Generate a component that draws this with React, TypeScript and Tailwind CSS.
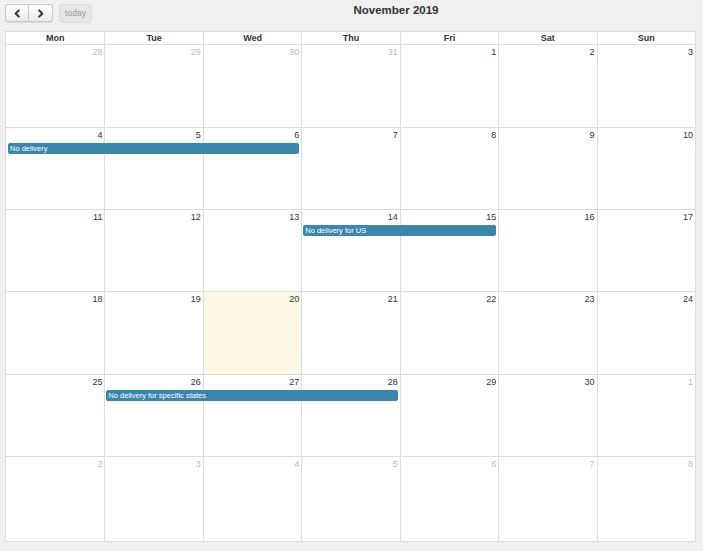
import React from 'react'

type Day = { n: number; other?: boolean; today?: boolean }
type Ev = { title: string; start: string; span: string }
type Week = { days: Day[]; events: Ev[] }

const colStart = ['col-start-1', 'col-start-2', 'col-start-3', 'col-start-4', 'col-start-5', 'col-start-6', 'col-start-7']

const weeks: Week[] = [
  {
    days: [{ n: 28, other: true }, { n: 29, other: true }, { n: 30, other: true }, { n: 31, other: true }, { n: 1 }, { n: 2 }, { n: 3 }],
    events: [],
  },
  {
    days: [4, 5, 6, 7, 8, 9, 10].map((n) => ({ n })),
    events: [{ title: 'No delivery', start: 'col-start-1', span: 'col-span-3' }],
  },
  {
    days: [11, 12, 13, 14, 15, 16, 17].map((n) => ({ n })),
    events: [{ title: 'No delivery for US', start: 'col-start-4', span: 'col-span-2' }],
  },
  {
    days: [18, 19, 20, 21, 22, 23, 24].map((n) => ({ n, today: n === 20 })),
    events: [],
  },
  {
    days: [{ n: 25 }, { n: 26 }, { n: 27 }, { n: 28 }, { n: 29 }, { n: 30 }, { n: 1, other: true }],
    events: [{ title: 'No delivery for specific states', start: 'col-start-2', span: 'col-span-3' }],
  },
  {
    days: [2, 3, 4, 5, 6, 7, 8].map((n) => ({ n, other: true })),
    events: [],
  },
]

const dayNames = ['Mon', 'Tue', 'Wed', 'Thu', 'Fri', 'Sat', 'Sun']

function Chevron({ dir }: { dir: 'left' | 'right' }) {
  return (
    <svg width="9" height="9" viewBox="0 0 10 10" fill="none" stroke="#333" strokeWidth="2.2" strokeLinecap="round" strokeLinejoin="round">
      {dir === 'left' ? <path d="M6.5 1.5 3 5l3.5 3.5" /> : <path d="M3.5 1.5 7 5 3.5 8.5" />}
    </svg>
  )
}

export default function App() {
  return (
    <div className="min-h-[551px] bg-[#f0f0f0] px-[5px] pt-[4px] text-[#333]" style={{ fontFamily: '"Liberation Sans", Arial, sans-serif' }}>
      <div className="flex items-start h-[27px]">
        <div className="flex">
          <div className="flex h-[18px] rounded-[3px] border border-[#c8c8c8] bg-gradient-to-b from-white to-[#ececec] shadow-[0_1px_1px_rgba(0,0,0,0.08)]">
            <button className="flex w-[23px] items-center justify-center border-r border-[#c8c8c8]">
              <Chevron dir="left" />
            </button>
            <button className="flex w-[23px] items-center justify-center">
              <Chevron dir="right" />
            </button>
          </div>
          <button className="ml-[6px] h-[19px] w-[33px] rounded-[3px] border border-[#dcdcdc] bg-[#e6e6e6] text-[8.5px] text-[#999]">
            today
          </button>
        </div>
        <h2 className="flex-1 pl-[2px] text-center text-[11.5px] font-bold leading-[13px]">November 2019</h2>
      </div>

      <div className="w-[691px] border border-[#ddd] bg-white">
        <div className="grid h-[12px] grid-cols-7">
          {dayNames.map((d, i) => (
            <div key={d} className={`text-center text-[9px] font-bold leading-[12px] ${i > 0 ? 'border-l border-[#ddd]' : ''}`}>
              {d}
            </div>
          ))}
        </div>
        <div className="grid h-[497px] grid-rows-[83px_82px_82px_83px_82px_85px]">
          {weeks.map((w, wi) => (
            <div key={wi} className="grid grid-cols-7 grid-rows-[auto_auto_1fr] border-t border-[#ddd]">
              {w.days.map((d, i) => (
                <div
                  key={'bg' + i}
                  className={`${colStart[i]} row-start-1 row-span-3 ${i > 0 ? 'border-l border-[#ddd]' : ''} ${d.today ? 'bg-[#fcf8e3]' : ''}`}
                />
              ))}
              {w.days.map((d, i) => (
                <div
                  key={'n' + i}
                  className={`${colStart[i]} row-start-1 h-[15px] pr-[2px] pt-[2px] text-right text-[9px] leading-[11px] ${d.other ? 'text-[#bbb]' : 'text-[#333]'}`}
                >
                  {d.n}
                </div>
              ))}
              {w.events.map((e, i) => (
                <div
                  key={'e' + i}
                  className={`${e.start} ${e.span} row-start-2 mx-[2px] h-[11px] overflow-hidden whitespace-nowrap rounded-[2px] border border-[#3a87ad] bg-[#3a87ad] pl-[1px] text-[7.5px] leading-[9px] text-white`}
                >
                  {e.title}
                </div>
              ))}
            </div>
          ))}
        </div>
      </div>
    </div>
  )
}
